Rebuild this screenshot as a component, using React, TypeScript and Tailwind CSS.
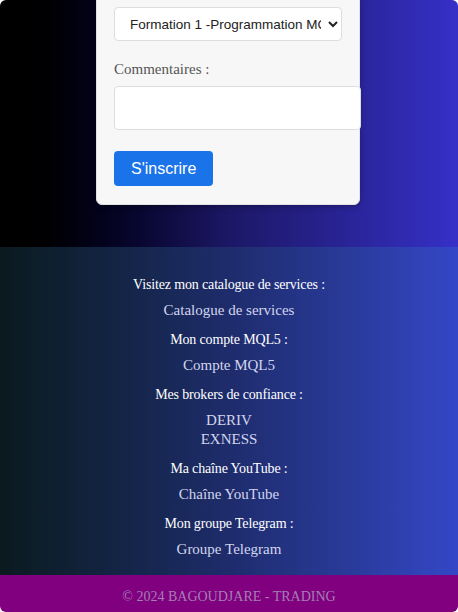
import { useState } from "react";

const LINKS = [
  { title: "Visitez mon catalogue de services :", items: ["Catalogue de services"] },
  { title: "Mon compte MQL5 :", items: ["Compte MQL5"] },
  { title: "Mes brokers de confiance :", items: ["DERIV", "EXNESS"] },
  { title: "Ma chaîne YouTube :", items: ["Chaîne YouTube"] },
  { title: "Mon groupe Telegram :", items: ["Groupe Telegram"] },
];

export default function App() {
  const [formation, setFormation] = useState("1");

  return (
    <div className="bg-white">
      <div className="h-[612px] overflow-hidden rounded-[6px] flex flex-col font-['Liberation_Serif',serif]">
        {/* Inscription */}
        <section className="bg-gradient-to-r from-[#000000] via-[#1c1866] to-[#3630c8] pb-[42px]">
          <div className="ml-[96px] w-[264px] -mt-[12px] pt-[18px] pb-[18px] px-[17px] bg-[#f7f7f7] rounded-[6px] border border-[#e2e2e2] shadow-[0_2px_6px_rgba(0,0,0,0.25)]">
            <select
              value={formation}
              onChange={(e) => setFormation(e.target.value)}
              className="w-[228px] h-[34px] pl-[11px] pr-[4px] bg-white border border-[#dddddd] rounded-[4px] text-[13.5px] text-[#222] font-['Liberation_Sans',Arial,sans-serif]"
            >
              <option value="1">Formation 1 -Programmation MQL5</option>
              <option value="2">Formation 2 -Trading</option>
            </select>

            <label className="block mt-[19px] text-[15px] leading-[18px] text-[#555]">
              Commentaires :
            </label>
            <textarea className="block mt-[8px] w-[247px] h-[44px] bg-white border border-[#dddddd] rounded-[4px] resize-none" />

            <button className="mt-[21px] h-[35px] px-[17px] bg-[#1a73e8] text-white text-[16px] rounded-[4px] font-['Liberation_Sans',Arial,sans-serif]">
              S'inscrire
            </button>
          </div>
        </section>

        {/* Liens */}
        <section className="flex-1 bg-gradient-to-r from-[#0b1a1f] via-[#1e2c6c] to-[#3447c6] pt-[30px] text-center">
          {LINKS.map(({ title, items }) => (
            <div key={title} className="mb-[12px]">
              <p className="text-[14px] leading-[16px] text-white tracking-[-0.15px]">{title}</p>
              <div className="mt-[8px] flex flex-col">
                {items.map((item) => (
                  <a key={item} href="#" className="text-[15px] leading-[19px] text-[#d3d5ee]">
                    {item}
                  </a>
                ))}
              </div>
            </div>
          ))}
        </section>

        {/* Copyright */}
        <footer className="h-[37px] shrink-0 bg-[#800080] flex items-center justify-center pt-[5px]">
          <span className="text-[14px] text-[#a47fb3]">© 2024 BAGOUDJARE - TRADING</span>
        </footer>
      </div>
    </div>
  );
}
